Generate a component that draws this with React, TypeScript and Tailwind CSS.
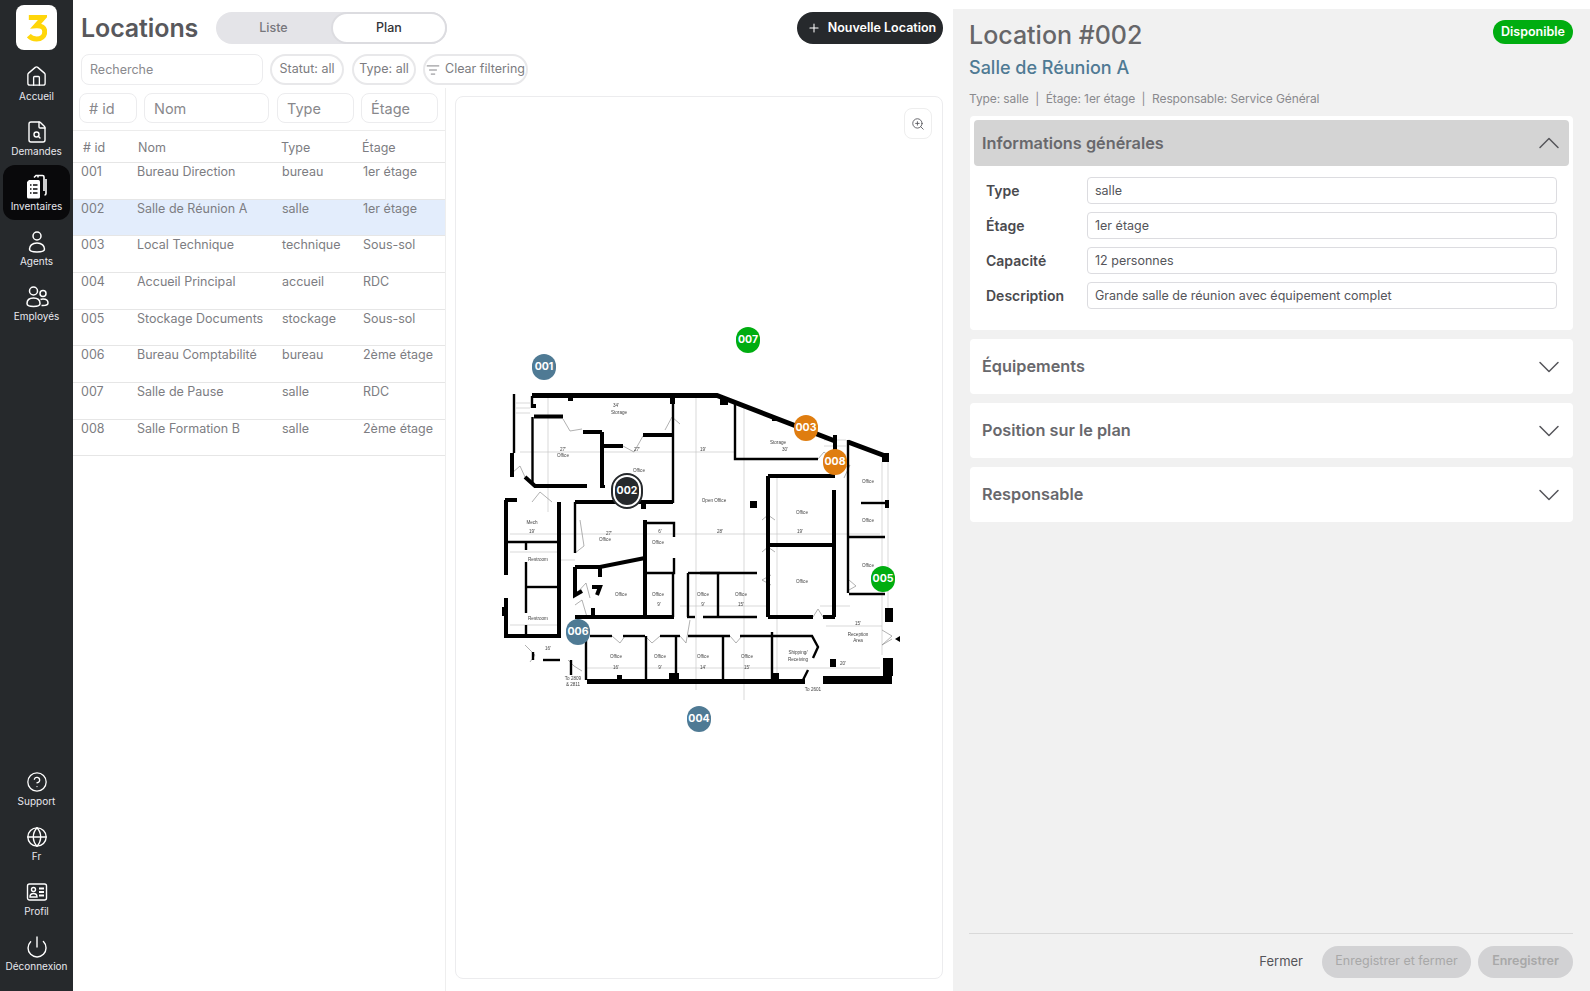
import { ChevronDown, ChevronUp, CircleHelp, FileSearch, Globe, House, ListFilter, Plus, Power, ZoomIn } from "lucide-react";
import type { ReactNode } from "react";

const rows = [
  ["001", "Bureau Direction", "bureau", "1er étage"],
  ["002", "Salle de Réunion A", "salle", "1er étage"],
  ["003", "Local Technique", "technique", "Sous-sol"],
  ["004", "Accueil Principal", "accueil", "RDC"],
  ["005", "Stockage Documents", "stockage", "Sous-sol"],
  ["006", "Bureau Comptabilité", "bureau", "2ème étage"],
  ["007", "Salle de Pause", "salle", "RDC"],
  ["008", "Salle Formation B", "salle", "2ème étage"],
];

// pin centres, in px from the top-left of the plan panel
const pins = [
  { id: "001", x: 88, y: 270, c: "#4f7a94" },
  { id: "003", x: 350, y: 331, c: "#df7d10" },
  { id: "004", x: 243, y: 622, c: "#4f7a94" },
  { id: "005", x: 427, y: 482, c: "#00ad10" },
  { id: "006", x: 122, y: 535, c: "#4f7a94" },
  { id: "007", x: 292, y: 243, c: "#00ad10" },
  { id: "008", x: 379, y: 365, c: "#df7d10" },
];

function InventoryIcon() {
  return (
    <svg width="24" height="26" viewBox="0 0 24 26" fill="none">
      <path d="M9 3.500 11 1.500h6.500a1.500 1.500 0 0 1 1.500 1.500v14" stroke="#fff" strokeWidth="1.600" />
      <path d="M13 2v1.500M21 5v14.500a1.500 1.500 0 0 1-1.500 1.500" stroke="#fff" strokeWidth="1.600" />
      <path d="M4 6h9.500A1.500 1.500 0 0 1 15 7.500V23a1.500 1.500 0 0 1-1.500 1.500h-10A1.500 1.500 0 0 1 2 23V8z" fill="#fff" />
      <path d="M5 11h1.500M8 11h4.500M5 15h1.500M8 15h4.500M5 19h1.500M8 19h4.500" stroke="#0b0b0d" strokeWidth="1.500" />
    </svg>
  );
}

function AgentIcon() {
  return (
    <svg width="24" height="24" viewBox="0 0 24 24" fill="none" stroke="#fff" strokeWidth="1.500">
      <circle cx="12" cy="6" r="4" />
      <path d="M12 13c-5 0-7.500 3-7.500 6 0 2 3 3 7.500 3s7.500-1 7.500-3c0-3-2.500-6-7.500-6z" />
    </svg>
  );
}

function EmployeesIcon() {
  return (
    <svg width="24" height="24" viewBox="0 0 24 24" fill="none" stroke="#fff" strokeWidth="1.500">
      <circle cx="8.500" cy="6" r="4" />
      <circle cx="18" cy="8.500" r="3" />
      <path d="M8.500 13c-4.500 0-6.500 2.500-6.500 5.500 0 2 2.500 3 6.500 3s6.500-1 6.500-3c0-3-2-5.500-6.500-5.500z" />
      <path d="M15.500 14.500c.8-.4 1.600-.5 2.500-.5 3 0 5 1.600 5 4 0 1.600-2 2.500-5 2.500h-1.500" />
    </svg>
  );
}

function ProfileIcon() {
  return (
    <svg width="22" height="20" viewBox="0 0 22 20" fill="none" stroke="#fff" strokeWidth="1.400">
      <rect x="1.500" y="2" width="19" height="16" rx="2" />
      <circle cx="7.500" cy="7.500" r="2" />
      <path d="M4 15c0-2 1.500-3.500 3.500-3.500S11 13 11 15z" />
      <path d="M13 6.500h5M13 10h5M13 13.500h5" strokeWidth="1.800" />
    </svg>
  );
}

function NavItem({ icon, label, active }: { icon: ReactNode; label: string; active?: boolean }) {
  return (
    <div className={`w-[67px] h-[55px] rounded-xl flex flex-col items-center justify-center ${active ? "bg-[#09090b]" : ""}`}>
      <div className="h-[26px] flex items-center justify-center">{icon}</div>
      <span className="text-[10px] leading-[12px] text-[#e8e8ee] whitespace-nowrap">{label}</span>
    </div>
  );
}

function Sidebar() {
  const ic = "text-white";
  return (
    <aside className="w-[73px] shrink-0 bg-[#26292c] flex flex-col items-center">
      <div className="mt-[5px] mb-[5px] w-[41px] h-[45px] rounded-lg bg-white flex items-center justify-center">
        <svg width="20" height="28" viewBox="0 0 22 30" fill="none">
          <path d="M2 3.500H18L10 12.500C16 12 19.500 14.500 19.500 19C19.500 24 15.500 27 10.500 27C7 27 4 25.800 2 23.500" stroke="#ffd60a" strokeWidth="5.500" />
        </svg>
      </div>
      <NavItem icon={<House size={23} strokeWidth={1.4} className={ic} />} label="Accueil" />
      <NavItem icon={<FileSearch size={24} strokeWidth={1.4} className={ic} />} label="Demandes" />
      <NavItem icon={<InventoryIcon />} label="Inventaires" active />
      <NavItem icon={<AgentIcon />} label="Agents" />
      <NavItem icon={<EmployeesIcon />} label="Employés" />
      <div className="mt-auto flex flex-col items-center mb-[11px]">
        <NavItem icon={<CircleHelp size={22} strokeWidth={1.4} className={ic} />} label="Support" />
        <NavItem icon={<Globe size={22} strokeWidth={1.5} className={ic} />} label="Fr" />
        <NavItem icon={<ProfileIcon />} label="Profil" />
        <NavItem icon={<Power size={24} strokeWidth={1.4} className={ic} />} label="Déconnexion" />
      </div>
    </aside>
  );
}

function Header() {
  return (
    <div className="flex items-center pt-[12px] pl-[8px] pr-[10px]">
      <h1 className="w-[135px] text-[25px] leading-[32px] font-semibold tracking-[-0.1px] text-[#58585c]">Locations</h1>
      <div className="w-[231px] h-[32px] rounded-full bg-[#e4e4e8] flex">
        <div className="w-[115px] flex items-center justify-center text-[12.500px] font-medium text-[#77777c]">Liste</div>
        <div className="w-[116px] rounded-full bg-white border-2 border-[#dcdce0] flex items-center justify-center text-[12.500px] font-medium text-[#333338]">Plan</div>
      </div>
      <button type="button" className="ml-auto w-[146px] h-[32px] pl-[3px] rounded-full bg-[#26292c] flex items-center justify-center gap-[7px] text-[12.500px] font-semibold text-white">
        <Plus size={14} strokeWidth={1.8} />
        Nouvelle Location
      </button>
    </div>
  );
}

function FilterBar() {
  const pill = "h-[31px] rounded-full border-2 border-[#e8e8ea] flex items-center justify-center text-[12.500px] text-[#7c7c80] whitespace-nowrap";
  return (
    <div className="flex items-center gap-[7px] mt-[10px] pl-[8px]">
      <input readOnly placeholder="Recherche" className="w-[182px] h-[31px] rounded-lg border border-[#ececee] px-[8px] text-[12.500px] outline-none placeholder:text-[#8a8a8e]" />
      <div className={`${pill} w-[74px]`}>Statut: all</div>
      <div className={`${pill} w-[64px] ml-[1px]`}>Type: all</div>
      <div className={`${pill} w-[105px] gap-[5px]`}>
        <ListFilter size={14} strokeWidth={1.6} />
        Clear filtering
      </div>
    </div>
  );
}

function ListColumn() {
  const input = "h-[30px] rounded-lg border border-[#ececee] px-[9px] text-[14.500px] outline-none placeholder:text-[#88888c]";
  return (
    <div className="w-[373px] shrink-0 border-r border-[#eeeeee] text-[#7d7d82]">
      <div className="flex pl-[6px] pr-[7px] pt-[5px] pb-[7px] border-b border-[#ececec]">
        <input readOnly placeholder="# id" className={`${input} w-[58px] mr-[7px]`} />
        <input readOnly placeholder="Nom" className={`${input} w-[125px] mr-[8px]`} />
        <input readOnly placeholder="Type" className={`${input} w-[77px] mr-[7px]`} />
        <input readOnly placeholder="Étage" className={`${input} w-[77px]`} />
      </div>
      <div className="grid grid-cols-[55px_143px_81px_1fr] pl-[10px] pt-[3px] h-[32px] items-center border-b border-[#e6e6e6] text-[12.500px]">
        <div># id</div>
        <div>Nom</div>
        <div>Type</div>
        <div>Étage</div>
      </div>
      {rows.map((r) => (
        <div key={r[0]} className={`grid grid-cols-[56px_145px_81px_1fr] pl-[8px] h-[36.670px] border-b border-[#e6e6e6] text-[12.500px] leading-[18px] ${r[0] === "002" ? "bg-[#e3edfc]" : ""}`}>
          <div>{r[0]}</div>
          <div className="whitespace-nowrap">{r[1]}</div>
          <div>{r[2]}</div>
          <div className="whitespace-nowrap">{r[3]}</div>
        </div>
      ))}
    </div>
  );
}

const thick = [
  "M512 453V477", "M505 500H517", "M506 500V575", "M506 598V636H559V502",
  "M575 567H600L645 558", "M575 567V595L582 591", "M600 568V577", "M592 587H600L597 595", "M593 608V617",
  "M575 617H674", "M645 520V617", "M602 432V487", "M768 476V617", "M768 476H835", "M834 490V617",
  "M768 545H834", "M768 617H813", "M823 617H835", "M835 435V452",
  "M534 416.500H563", "M583 432H602", "M602 446H623", "M643 435H673", "M525 477L535 486H587", "M575 502H673",
];
const medium = [
  "M673 403V503", "M532.500 417V484", "M532 396V408", "M575 502V553", "M645 523H674V537", "M674 558V573H645", "M673 573V617",
  "M688 573V617", "M688 573H720", "M718 573V617", "M687 617H695", "M703 617H757", "M700 573H757",
  "M590 636H612", "M623 636H645", "M660 636H680", "M688 636H730", "M740 636H812L818 647L813 658",
  "M586 636V680", "M646 636V680", "M676 636V673", "M723 636V680", "M772 632V680", "M533 652V660", "M543 660H560", "M571 660V675",
  "M735 403V459H818", "M848 440V593", "M849 537H885", "M849 594H885", "M861 503H887", "M808 670L803 680",
  "M508 542H558", "M527 587H558", "M526 562V613", "M526 542V550", "M526 625V636", "M514 394V453",
];
const blocks = [
  [568, 398, 5, 3], [670, 398, 5, 6], [641, 503, 5, 6], [720, 398, 8, 7], [772, 417, 6, 4], [882, 453, 7, 9],
  [885, 500, 4, 8], [885, 608, 8, 14], [883, 658, 10, 18], [830, 659, 6, 8], [750, 501, 7, 7],
  [502, 607, 4, 9], [669, 673, 10, 8], [617, 675, 5, 6], [772, 673, 7, 8], [532, 404, 4, 4], [600, 485, 5, 3],
];
const thinLines = [
  "M520 452H735", "M548 396V512", "M696 396V690", "M744 404V700", "M510 534H880", "M680 606H770", "M586 668H880",
  "M777 476V680", "M882 462V655", "M888 462V610", "M516 403H530M516 408H530M516 413H530", "M824 440H846M824 446H846",
  "M560 560H575", "M510 552H558", "M510 625H558", "M820 606H850", "M826 626H882",
];
const doors = [
  "M563 419L570 431L582 429", "M665 430L672 417L680 424", "M512 473L520 466L525 477", "M532 502L540 492L552 502",
  "M575 553L584 546L580 520", "M575 595L586 583L590 598", "M575 605L582 600L587 617", "M623 446L634 452L643 436",
  "M612 636L620 643L625 636", "M645 636L652 643L660 636", "M680 636L686 643L690 620", "M730 636L736 643L742 636",
  "M813 617L818 609L823 617", "M882 630L892 636L882 645L892 639", "M525 645L535 655L530 662", "M568 660L574 666L582 671",
  "M840 470L850 465L844 478", "M762 520L768 515L775 520", "M762 552L768 547L775 552", "M771 585L762 580L771 575",
  "M818 459L824 452L835 461", "M849 590L856 586L849 580",
];
const labels: [number, number, string][] = [
  [619, 414, "Storage"], [563, 457, "Office"], [639, 472, "Office"], [714, 502, "Open Office"], [778, 444, "Storage"],
  [802, 514, "Office"], [868, 483, "Office"], [868, 522, "Office"], [532, 524, "Mech"], [605, 541, "Office"],
  [538, 561, "Restroom"], [538, 620, "Restroom"], [658, 544, "Office"], [621, 596, "Office"], [658, 596, "Office"],
  [703, 596, "Office"], [741, 596, "Office"], [616, 658, "Office"], [660, 658, "Office"], [703, 658, "Office"],
  [747, 658, "Office"], [802, 583, "Office"], [868, 567, "Office"], [858, 636, "Reception"], [858, 642, "Area"],
  [798, 654, "Shipping/"], [798, 661, "Receiving"], [573, 680, "To 2809"], [573, 686, "& 2811"], [813, 691, "To 2601"],
  [616, 407, "34'"], [563, 451, "27'"], [637, 451, "27'"], [703, 451, "19'"], [785, 451, "30'"], [720, 533, "28'"],
  [800, 533, "19'"], [609, 535, "27'"], [532, 533, "19'"], [660, 533, "6'"], [741, 606, "15'"], [703, 606, "9'"],
  [659, 606, "9'"], [616, 669, "16'"], [660, 669, "9'"], [703, 669, "14'"], [747, 669, "15'"], [858, 625, "15'"],
  [843, 665, "20'"], [548, 650, "16'"],
];

function FloorPlan() {
  return (
    <svg viewBox="456 97 486 881" className="block w-full h-full blur-[0.35px]" fill="none" strokeLinecap="butt">
      <g stroke="#c9c9c9" strokeWidth="0.7">
        {thinLines.map((d) => <path key={d} d={d} />)}
      </g>
      <g stroke="#8f8f8f" strokeWidth="0.7">
        {doors.map((d) => <path key={d} d={d} />)}
      </g>
      <g stroke="#000" strokeWidth="4">
        {thick.map((d) => <path key={d} d={d} />)}
      </g>
      <g stroke="#000" strokeWidth="2.400">
        {medium.map((d) => <path key={d} d={d} />)}
      </g>
      <path d="M532 395.500H717L835 441M848 442L888 457" stroke="#000" strokeWidth="5" />
      <path d="M587 679H805V684H587zM823 676H892V684H823z" fill="#000" />
      <path d="M900 636L895 639L900 642z" fill="#000" />
      <g fill="#000">
        {blocks.map(([x, y, w, h]) => <rect key={`${x}-${y}`} x={x} y={y} width={w} height={h} />)}
      </g>
      <g fill="#444" fontSize="4.600" textAnchor="middle" fontFamily="Liberation Sans, sans-serif">
        {labels.map(([x, y, t]) => <text key={`${x}-${y}`} x={x} y={y}>{t}</text>)}
      </g>
    </svg>
  );
}

function PlanPanel() {
  return (
    <div className="relative w-[488px] h-[883px] ml-[9px] mt-[8px] rounded-lg border border-[#ececee] bg-white overflow-hidden">
      <FloorPlan />
      <div className="absolute left-[448px] top-[11px] w-[28px] h-[31px] rounded-lg border border-[#eeeeee] bg-white flex items-center justify-center text-[#55555a]">
        <ZoomIn size={14} strokeWidth={1.5} />
      </div>
      {pins.map((p) => (
        <div
          key={p.id}
          className="absolute w-[24px] h-[26px] -ml-[12px] -mt-[13px] rounded-full flex items-center justify-center text-[10.500px] font-bold text-white"
          style={{ left: p.x, top: p.y, backgroundColor: p.c }}
        >
          {p.id}
        </div>
      ))}
      <div className="absolute left-[155px] top-[376px] w-[32px] h-[36px] rounded-full border-2 border-[#26292c] bg-white p-[2px]">
        <div className="w-full h-full rounded-full bg-[#26292c] flex items-center justify-center text-[10.500px] font-bold text-white">002</div>
      </div>
    </div>
  );
}

function Field({ label, value }: { label: string; value: string }) {
  return (
    <div className="flex items-center h-[27px]">
      <label className="w-[104px] pl-[3px] text-[14px] font-semibold text-[#4a4a4e]">{label}</label>
      <input readOnly value={value} className="flex-1 h-[27px] rounded border border-[#dcdce0] px-[7px] text-[12.500px] text-[#55555a] outline-none" />
    </div>
  );
}

function Collapsed({ title }: { title: string }) {
  return (
    <div className="ml-[1px] h-[55px] rounded bg-white flex items-center justify-between pl-[12px] pr-[6px] text-[16.300px] font-semibold text-[#68686c]">
      {title}
      <ChevronDown size={36} strokeWidth={1} className="text-[#55555a]" />
    </div>
  );
}

function DetailPanel() {
  return (
    <section className="flex-1 mt-[9px] bg-[#f1f1f1] pl-[16px] pr-[17px] flex flex-col">
      <div className="flex items-start justify-between pt-[11px]">
        <h2 className="text-[25px] leading-[28px] pt-[1px] font-medium text-[#666669]">Location #002</h2>
        <span className="h-[24px] w-[80px] rounded-full bg-[#00ad10] flex items-center justify-center text-[12.500px] font-semibold text-white">Disponible</span>
      </div>
      <h3 className="mt-[7px] text-[18px] leading-[24px] font-medium text-[#4f7a94]">Salle de Réunion A</h3>
      <p className="mt-[10px] text-[12px] leading-[18px] tracking-[-0.1px] text-[#8a8a8e] whitespace-pre">Type: salle  |  Étage: 1er étage  |  Responsable: Service Général</p>
      <div className="ml-[1px] mt-[8px] h-[214px] rounded bg-white p-[4px] pb-0">
        <div className="h-[46px] rounded-sm bg-[#d4d4d4] flex items-center justify-between pl-[8px] pr-[2px] text-[16.300px] font-semibold text-[#68686c]">
          Informations générales
          <ChevronUp size={36} strokeWidth={1} className="text-[#55555a]" />
        </div>
        <div className="mt-[11px] pl-[9px] pr-[12px] flex flex-col gap-[8px]">
          <Field label="Type" value="salle" />
          <Field label="Étage" value="1er étage" />
          <Field label="Capacité" value="12 personnes" />
          <Field label="Description" value="Grande salle de réunion avec équipement complet" />
        </div>
      </div>
      <div className="mt-[9px] flex flex-col gap-[9px]">
        <Collapsed title="Équipements" />
        <Collapsed title="Position sur le plan" />
        <Collapsed title="Responsable" />
      </div>
      <div className="mt-auto border-t border-[#d9d9d9] h-[58px] flex items-center justify-end pb-[2px]">
        <button type="button" className="mr-[19px] text-[13px] text-[#55555a]">Fermer</button>
        <button type="button" className="w-[149px] h-[32px] rounded-full bg-[#d2d2d4] text-[12.500px] text-[#a8a8a8]">Enregistrer et fermer</button>
        <button type="button" className="ml-[7px] w-[95px] h-[32px] rounded-full bg-[#d2d2d4] text-[12.500px] font-semibold text-[#a8a8a8]">Enregistrer</button>
      </div>
    </section>
  );
}

export default function App() {
  return (
    <div className="flex w-full h-screen bg-white overflow-hidden [font-family:Inter,sans-serif]">
      <Sidebar />
      <main className="w-[880px] shrink-0 flex flex-col">
        <Header />
        <FilterBar />
        <div className="flex flex-1 mt-[3px] min-h-0">
          <ListColumn />
          <PlanPanel />
        </div>
      </main>
      <DetailPanel />
    </div>
  );
}
